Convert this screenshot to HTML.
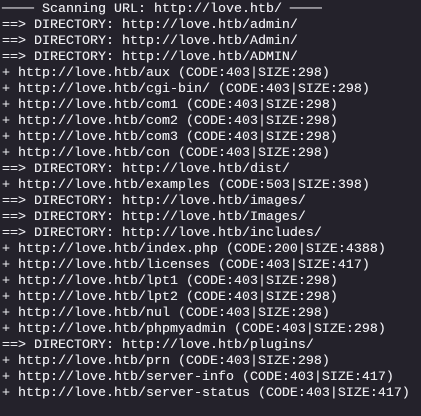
<!DOCTYPE html>
<html><head><meta charset="utf-8"><style>
html,body{margin:0;padding:0;background:#24222b;width:421px;height:416px;overflow:hidden}
pre{margin:0;padding:2px 0 0 2px;font-family:"Liberation Mono","DejaVu Sans Mono",monospace;font-size:13.33px;line-height:16px;color:#ececf0;white-space:pre;text-shadow:0 0 0.3px #ececf0}
</style></head><body><pre>──── Scanning URL: http://love.htb/ ────
==> DIRECTORY: http://love.htb/admin/
==> DIRECTORY: http://love.htb/Admin/
==> DIRECTORY: http://love.htb/ADMIN/
+ http://love.htb/aux (CODE:403|SIZE:298)
+ http://love.htb/cgi-bin/ (CODE:403|SIZE:298)
+ http://love.htb/com1 (CODE:403|SIZE:298)
+ http://love.htb/com2 (CODE:403|SIZE:298)
+ http://love.htb/com3 (CODE:403|SIZE:298)
+ http://love.htb/con (CODE:403|SIZE:298)
==> DIRECTORY: http://love.htb/dist/
+ http://love.htb/examples (CODE:503|SIZE:398)
==> DIRECTORY: http://love.htb/images/
==> DIRECTORY: http://love.htb/Images/
==> DIRECTORY: http://love.htb/includes/
+ http://love.htb/index.php (CODE:200|SIZE:4388)
+ http://love.htb/licenses (CODE:403|SIZE:417)
+ http://love.htb/lpt1 (CODE:403|SIZE:298)
+ http://love.htb/lpt2 (CODE:403|SIZE:298)
+ http://love.htb/nul (CODE:403|SIZE:298)
+ http://love.htb/phpmyadmin (CODE:403|SIZE:298)
==> DIRECTORY: http://love.htb/plugins/
+ http://love.htb/prn (CODE:403|SIZE:298)
+ http://love.htb/server-info (CODE:403|SIZE:417)
+ http://love.htb/server-status (CODE:403|SIZE:417)</pre></body></html>
